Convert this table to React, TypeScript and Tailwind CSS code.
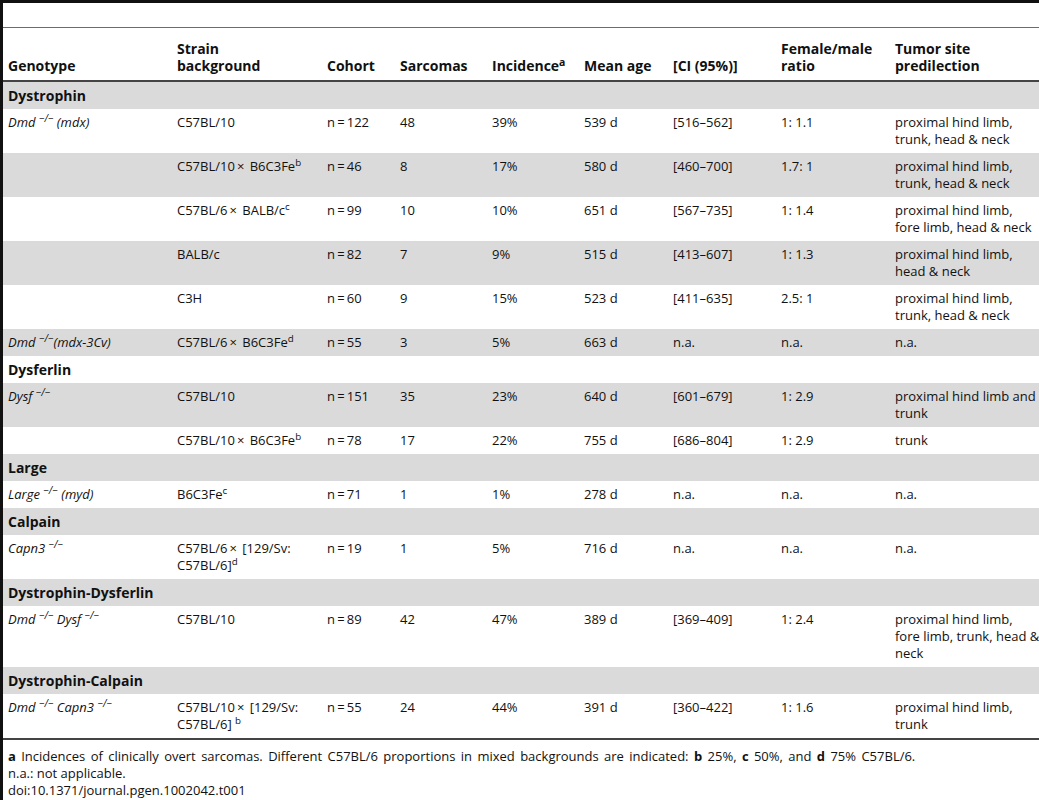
import type { ReactNode } from "react";

type Row =
  | { group: string }
  | {
      geno?: ReactNode;
      strain: ReactNode;
      cohort: string;
      sarcomas: string;
      incidence: string;
      age: string;
      ci: string;
      ratio: string;
      site: ReactNode;
    };

const KO = () => <sup className="text-[10px] italic">−/−</sup>;

const rows: Row[] = [
  { group: "Dystrophin" },
  {
    geno: (
      <>
        Dmd <KO /> (mdx)
      </>
    ),
    strain: "C57BL/10",
    cohort: "n\u2009=\u2009122",
    sarcomas: "48",
    incidence: "39%",
    age: "539 d",
    ci: "[516–562]",
    ratio: "1: 1.1",
    site: "proximal hind limb, trunk, head & neck",
  },
  {
    strain: (
      <>
        C57BL/10<span className="mx-[2px]">×</span> B6C3Fe<sup>b</sup>
      </>
    ),
    cohort: "n\u2009=\u200946",
    sarcomas: "8",
    incidence: "17%",
    age: "580 d",
    ci: "[460–700]",
    ratio: "1.7: 1",
    site: "proximal hind limb, trunk, head & neck",
  },
  {
    strain: (
      <>
        C57BL/6<span className="mx-[2px]">×</span> BALB/c<sup>c</sup>
      </>
    ),
    cohort: "n\u2009=\u200999",
    sarcomas: "10",
    incidence: "10%",
    age: "651 d",
    ci: "[567–735]",
    ratio: "1: 1.4",
    site: "proximal hind limb, fore limb, head & neck",
  },
  {
    strain: "BALB/c",
    cohort: "n\u2009=\u200982",
    sarcomas: "7",
    incidence: "9%",
    age: "515 d",
    ci: "[413–607]",
    ratio: "1: 1.3",
    site: "proximal hind limb, head & neck",
  },
  {
    strain: "C3H",
    cohort: "n\u2009=\u200960",
    sarcomas: "9",
    incidence: "15%",
    age: "523 d",
    ci: "[411–635]",
    ratio: "2.5: 1",
    site: "proximal hind limb, trunk, head & neck",
  },
  {
    geno: (
      <>
        Dmd <KO />(mdx-3Cv)
      </>
    ),
    strain: (
      <>
        C57BL/6<span className="mx-[2px]">×</span> B6C3Fe<sup>d</sup>
      </>
    ),
    cohort: "n\u2009=\u200955",
    sarcomas: "3",
    incidence: "5%",
    age: "663 d",
    ci: "n.a.",
    ratio: "n.a.",
    site: "n.a.",
  },
  { group: "Dysferlin" },
  {
    geno: (
      <>
        Dysf <KO />
      </>
    ),
    strain: "C57BL/10",
    cohort: "n\u2009=\u2009151",
    sarcomas: "35",
    incidence: "23%",
    age: "640 d",
    ci: "[601–679]",
    ratio: "1: 2.9",
    site: "proximal hind limb and trunk",
  },
  {
    strain: (
      <>
        C57BL/10<span className="mx-[2px]">×</span> B6C3Fe<sup>b</sup>
      </>
    ),
    cohort: "n\u2009=\u200978",
    sarcomas: "17",
    incidence: "22%",
    age: "755 d",
    ci: "[686–804]",
    ratio: "1: 2.9",
    site: "trunk",
  },
  { group: "Large" },
  {
    geno: (
      <>
        Large <KO /> (myd)
      </>
    ),
    strain: (
      <>
        B6C3Fe<sup>c</sup>
      </>
    ),
    cohort: "n\u2009=\u200971",
    sarcomas: "1",
    incidence: "1%",
    age: "278 d",
    ci: "n.a.",
    ratio: "n.a.",
    site: "n.a.",
  },
  { group: "Calpain" },
  {
    geno: (
      <>
        Capn3 <KO />
      </>
    ),
    strain: (
      <>
        C57BL/6<span className="mx-[2px]">×</span> [129/Sv: C57BL/6]<sup>d</sup>
      </>
    ),
    cohort: "n\u2009=\u200919",
    sarcomas: "1",
    incidence: "5%",
    age: "716 d",
    ci: "n.a.",
    ratio: "n.a.",
    site: "n.a.",
  },
  { group: "Dystrophin-Dysferlin" },
  {
    geno: (
      <>
        Dmd <KO /> Dysf <KO />
      </>
    ),
    strain: "C57BL/10",
    cohort: "n\u2009=\u200989",
    sarcomas: "42",
    incidence: "47%",
    age: "389 d",
    ci: "[369–409]",
    ratio: "1: 2.4",
    site: (
      <>
        proximal hind limb,
        <br />
        <span className="whitespace-nowrap">fore limb, trunk, head &amp;</span>
        <br />
        neck
      </>
    ),
  },
  { group: "Dystrophin-Calpain" },
  {
    geno: (
      <>
        Dmd <KO /> Capn3 <KO />
      </>
    ),
    strain: (
      <>
        C57BL/10<span className="mx-[2px]">×</span> [129/Sv: C57BL/6] <sup>b</sup>
      </>
    ),
    cohort: "n\u2009=\u200955",
    sarcomas: "24",
    incidence: "44%",
    age: "391 d",
    ci: "[360–422]",
    ratio: "1: 1.6",
    site: "proximal hind limb, trunk",
  },
];

const widths = [169, 150, 73, 92, 92, 89, 108, 114, 149];

const th = "pl-[5px] pr-1 pt-3 pb-[6px]";
const td = "pl-[5px] pr-1 py-[5px]";

export default function App() {
  return (
    <div
      className="w-[1039px] min-h-[800px] bg-white text-[13px] leading-[17px] text-[#111] border-t-[3px] border-l-[3px] border-[#111]"
      style={{ fontFamily: '"Open Sans", "Liberation Sans", sans-serif' }}
    >
      {/* empty caption strip */}
      <div className="h-[25px] border-b border-[#6b6b6b]" />

      <table className="w-[1036px] table-fixed border-collapse">
        <colgroup>
          {widths.map((w, i) => (
            <col key={i} style={{ width: w }} />
          ))}
        </colgroup>
        <thead>
          <tr className="border-b-2 border-[#444] align-bottom font-bold text-left text-[14px]">
            <th className={th}>Genotype</th>
            <th className={th}>
              Strain
              <br />
              background
            </th>
            <th className={th}>Cohort</th>
            <th className={th}>Sarcomas</th>
            <th className={th}>
              Incidence<sup className="font-bold">a</sup>
            </th>
            <th className={th}>Mean age</th>
            <th className={th}>[CI (95%)]</th>
            <th className={th}>
              Female/male
              <br />
              ratio
            </th>
            <th className={th}>
              Tumor site
              <br />
              predilection
            </th>
          </tr>
        </thead>
        <tbody className="border-b-2 border-[#444]">
          {rows.map((r, i) => {
            const bg = i % 2 === 0 ? "bg-[#dadada]" : "bg-white";
            if ("group" in r) {
              return (
                <tr key={i} className={bg}>
                  <td colSpan={9} className="pl-[5px] py-[5px] font-bold text-[14px]">
                    {r.group}
                  </td>
                </tr>
              );
            }
            return (
              <tr key={i} className={`${bg} align-top`}>
                <td className={`${td} italic`}>{r.geno}</td>
                <td className={td}>{r.strain}</td>
                <td className={td}>{r.cohort}</td>
                <td className={td}>{r.sarcomas}</td>
                <td className={td}>{r.incidence}</td>
                <td className={td}>{r.age}</td>
                <td className={td}>{r.ci}</td>
                <td className={td}>{r.ratio}</td>
                <td className="pl-[5px] pr-0 py-[5px]">{r.site}</td>
              </tr>
            );
          })}
        </tbody>
      </table>

      <div className="pl-[5px] pt-[8px]">
        <p className="[word-spacing:2px]">
          <b>a</b> Incidences of clinically overt sarcomas. Different C57BL/6 proportions in mixed
          backgrounds are indicated: <b>b</b> 25%, <b>c</b> 50%, and <b>d</b> 75% C57BL/6.
        </p>
        <p>n.a.: not applicable.</p>
        <p>doi:10.1371/journal.pgen.1002042.t001</p>
      </div>
    </div>
  );
}
